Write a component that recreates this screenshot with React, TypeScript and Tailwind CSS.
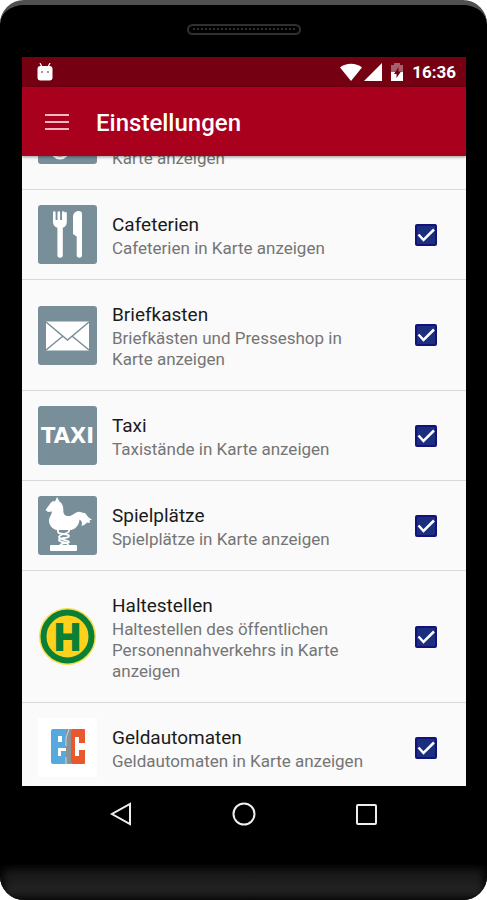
import type { ReactNode } from 'react'

type Setting = {
  id: string
  title: string
  description: string
  icon: ReactNode
}

function Tile({ children }: { children: ReactNode }) {
  return (
    <div className="flex size-[59px] shrink-0 items-center justify-center rounded-[3px] bg-[#788f99] text-white">
      {children}
    </div>
  )
}

function CutleryIcon() {
  return (
    <Tile>
      <svg viewBox="0 0 59 59" className="size-full" fill="currentColor">
        <path d="M15 7.500a1.300 1.300 0 0 1 2.600 0V15h1.900V7.500a1.300 1.300 0 0 1 2.600 0V15H24V7.500a1.300 1.300 0 0 1 2.600 0V15h0V7.500a1.300 1.300 0 0 1 2.200 0V17c0 3-1.600 5-4 5.800V50a2.500 2.500 0 0 1-5.400 0V22.800C16.800 22 15 20 15 17z" />
        <path d="M35 12c0-4 3-6 5.500-6S44 7 44 9v41a2.600 2.600 0 0 1-5.300 0V31.500L35 29z" />
      </svg>
    </Tile>
  )
}

function MailIcon() {
  return (
    <Tile>
      <svg viewBox="0 0 59 59" className="size-full">
        <rect x="8" y="15.500" width="43" height="29" fill="#fff" />
        <path d="M8 16l21.500 18L51 16M8 44l17-14M51 44L34 30" fill="none" stroke="#788f99" strokeWidth="1.500" />
      </svg>
    </Tile>
  )
}

function TaxiIcon() {
  return (
    <Tile>
      <span className="font-['DejaVu_Sans',sans-serif] text-[21px] leading-6 font-bold">TAXI</span>
    </Tile>
  )
}

function HorseIcon() {
  return (
    <Tile>
      <svg viewBox="0 0 59 59" className="size-full" fill="currentColor">
        <path d="M19 1l2.500 4.500c3 2 4 5 3.800 9 0 4 2.200 6 6.200 5.500 4-.5 5.500-4 9.500-4.200 2.500 0 4 1.700 6 1.200 2 2.500 3.500 5 7 6.500l-2.500 1 .5 2.500-3-.5c-1.500 2-3.500 3-5.500 3.200 1-2.500.5-5-2-6.200-.3 5-3 9-8 10.500H18c-4-1.500-7-5-7-9.500 0-3.500 2.700-5.500 3-9L10 16l-2.500-2L13 6.500 15 5l2 .5z" />
        <rect x="12" y="49" width="27" height="6" rx="1" />
        <path d="M20 33v3c0 3 11 1 11 4s-10 1-10 4 9 1 9 5M31 33v2c0 3-10 3-10 6s10 3 10 5-9 0-9 4" fill="none" stroke="currentColor" strokeWidth="1.800" />
      </svg>
    </Tile>
  )
}

function StopIcon() {
  return (
    <svg viewBox="0 0 59 59" className="size-[59px] shrink-0">
      <circle cx="29.500" cy="29.500" r="28.500" fill="#fadb4a" />
      <circle cx="29.500" cy="29.500" r="24" fill="#fdd21c" stroke="#0a8037" strokeWidth="6" />
      <text x="29.500" y="42.500" textAnchor="middle" fontFamily="Liberation Sans" fontWeight="700" fontSize="36" fill="#0a8037" stroke="#0a8037" strokeWidth="2">H</text>
    </svg>
  )
}

function CashIcon() {
  return (
    <svg viewBox="0 0 59 59" className="size-[59px] shrink-0">
      <rect width="59" height="59" fill="#fff" />
      <rect x="13" y="11" width="16" height="35" rx="2" fill="#56a9dd" />
      <rect x="33" y="11" width="14" height="35" rx="1" fill="#e9582c" />
      <rect x="28" y="11" width="5" height="35" fill="#8b9297" />
      <path d="M31 11l-3 9v8M28 46v-7" fill="none" stroke="#fff" strokeWidth="0.600" />
      <rect x="20" y="18" width="4" height="6" fill="#fff" />
      <rect x="20" y="30" width="8" height="3" fill="#fff" />
      <rect x="20" y="33" width="3" height="5" fill="#fff" />
      <rect x="37" y="19" width="4" height="19" fill="#fff" />
      <rect x="41" y="25" width="6" height="7" fill="#fff" />
    </svg>
  )
}

const settings: Setting[] = [
  { id: 'cafeterien', title: 'Cafeterien', description: 'Cafeterien in Karte anzeigen', icon: <CutleryIcon /> },
  { id: 'briefkasten', title: 'Briefkasten', description: 'Briefkästen und Presseshop in Karte anzeigen', icon: <MailIcon /> },
  { id: 'taxi', title: 'Taxi', description: 'Taxistände in Karte anzeigen', icon: <TaxiIcon /> },
  { id: 'spielplaetze', title: 'Spielplätze', description: 'Spielplätze in Karte anzeigen', icon: <HorseIcon /> },
  { id: 'haltestellen', title: 'Haltestellen', description: 'Haltestellen des öffentlichen Personennahverkehrs in Karte anzeigen', icon: <StopIcon /> },
  { id: 'geldautomaten', title: 'Geldautomaten', description: 'Geldautomaten in Karte anzeigen', icon: <CashIcon /> },
]

function SettingRow({ setting }: { setting: Setting }) {
  return (
    <li className="flex items-center border-b border-[#d8d8d8] pr-[29px] pl-4">
      {setting.icon}
      <label htmlFor={setting.id} className="flex-1 pt-[22px] pr-8 pb-5 pl-[15px]">
        <span className="block text-[19px] leading-[26px] text-[#1a1a1a]">{setting.title}</span>
        <span className="block text-[17px] leading-[21px] text-[#757575]">{setting.description}</span>
      </label>
      <span className="relative flex size-[22px] shrink-0">
        <input id={setting.id} type="checkbox" defaultChecked className="peer size-full appearance-none rounded-xs border-2 border-[#12127a] checked:bg-[#1b2f7e]" />
        <svg viewBox="0 0 22 22" className="pointer-events-none absolute inset-0 hidden peer-checked:block" fill="none" stroke="#fff" strokeWidth="2.500">
          <path d="M3.500 10.500l5 5.500L19 5.500" />
        </svg>
      </span>
    </li>
  )
}

function StatusBar() {
  return (
    <div className="flex h-[30px] shrink-0 items-center bg-[#750012] pr-[10px] pl-[15px] text-white">
      <svg viewBox="0 0 16 18" className="h-[18px] w-4">
        <path d="M3 0l2 4M13 0l-2 4" stroke="#fff" strokeWidth="1.200" />
        <rect x="0.500" y="3" width="15" height="14.500" rx="3" fill="#fff" />
        <circle cx="5" cy="9" r="1" fill="#a86670" />
        <circle cx="11" cy="9" r="1" fill="#a86670" />
      </svg>
      <div className="ml-auto flex items-center">
        <svg viewBox="0 0 22 18" className="h-[18px] w-[22px]" fill="currentColor">
          <path d="M0 4.500C6-.5 16-.5 22 4.500L11 18z" />
        </svg>
        <svg viewBox="0 0 18 18" className="ml-[2px] size-[18px]" fill="currentColor">
          <path d="M18 0v18H0z" />
        </svg>
        <svg viewBox="0 0 14 18" className="ml-2 h-[18px] w-[14px]">
          <path d="M1 2h3V0h6v2h3v8H1z" fill="#a4606b" />
          <path d="M1 9h12v9H1z" fill="#fff" />
          <path d="M8.500 4L4 11h2.500v4L11 8.500H8.500z" fill="#750012" />
        </svg>
        <span className="ml-2 text-[17px] leading-6 font-bold">16:36</span>
      </div>
    </div>
  )
}

export default function App() {
  return (
    <div className="h-screen bg-white font-['Roboto',sans-serif]">
      <div className="flex h-full flex-col overflow-hidden rounded-[24px] border-t-[5px] border-[#505050] bg-black">
        <div className="flex h-[52px] shrink-0 items-center justify-center">
          <div className="mb-1 flex h-[11px] w-[114px] items-center rounded-full border-2 border-[#303030] px-1">
            <div className="w-full border-t-2 border-dotted border-[#303030]" />
          </div>
        </div>

        <div className="mr-[21px] ml-[22px] flex min-h-0 flex-1 flex-col bg-[#fafafa]">
          <StatusBar />
          <header className="z-10 flex h-[69px] shrink-0 items-center bg-[#a9001e] pl-[23px] text-white shadow-[0_1px_3px_rgba(0,0,0,0.4)]">
            <button type="button" aria-label="Menü" className="flex h-4 w-6 flex-col justify-between">
              <span className="h-[2px] w-full bg-[#f6b9c1]" />
              <span className="h-[2px] w-full bg-[#f6b9c1]" />
              <span className="h-[2px] w-full bg-[#f6b9c1]" />
            </button>
            <h1 className="ml-[27px] pt-[3px] text-2xl font-medium">Einstellungen</h1>
          </header>

          <ul className="min-h-0 flex-1 overflow-hidden">
            <li className="flex h-[34px] items-end overflow-hidden border-b border-[#d8d8d8] pl-4">
              <div className="mb-[25px]">
                <Tile>
                  <svg viewBox="0 0 59 59" className="size-full" fill="none" stroke="#fff" strokeWidth="3">
                    <circle cx="22" cy="45" r="8" />
                  </svg>
                </Tile>
              </div>
              <span className="pb-5 pl-[15px] text-[17px] leading-[21px] text-[#757575]">Karte anzeigen</span>
            </li>
            {settings.map((setting) => (
              <SettingRow key={setting.id} setting={setting} />
            ))}
          </ul>
        </div>

        <nav className="flex h-[79px] shrink-0 items-start justify-between px-[109px] pt-4">
          <button type="button" aria-label="Zurück">
            <svg viewBox="0 0 24 24" className="size-6" fill="none" stroke="#eee" strokeWidth="2">
              <path d="M21 2v20L3 12z" />
            </svg>
          </button>
          <button type="button" aria-label="Startseite">
            <svg viewBox="0 0 24 24" className="size-6" fill="none" stroke="#eee" strokeWidth="2">
              <circle cx="12" cy="12" r="10.500" />
            </svg>
          </button>
          <button type="button" aria-label="Übersicht">
            <svg viewBox="0 0 24 24" className="size-6" fill="none" stroke="#eee" strokeWidth="2">
              <rect x="3" y="3" width="19" height="19" rx="1" />
            </svg>
          </button>
        </nav>
        <div className="h-[35px] shrink-0 bg-linear-to-b from-[#141414] to-[#282828] shadow-[inset_0_0_8px_3px_#000]" />
      </div>
    </div>
  )
}
